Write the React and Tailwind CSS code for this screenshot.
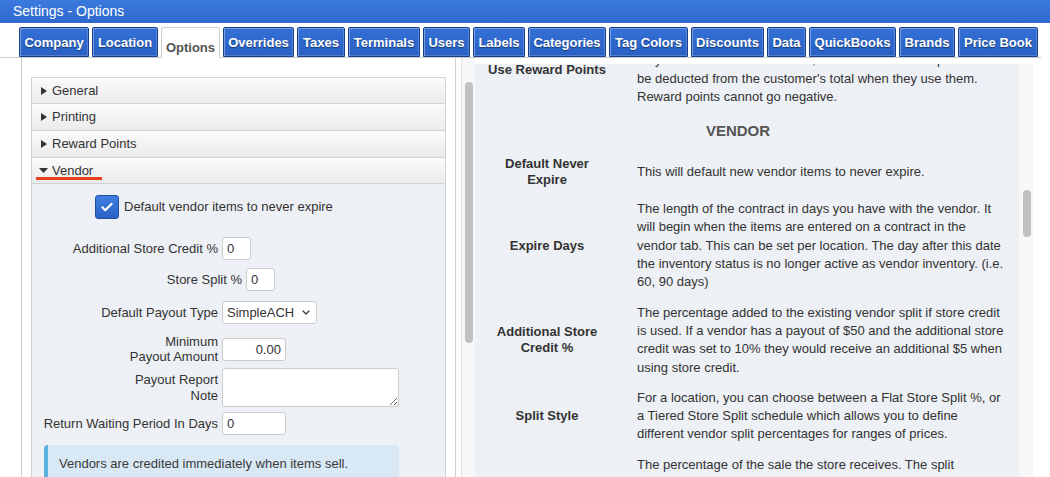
import React from 'react';

const tabs = [
  { label: 'Company', w: 'w-[70px]' },
  { label: 'Location', w: 'w-[66px]' },
  { label: 'Options', w: 'w-[59px]', active: true },
  { label: 'Overrides', w: 'w-[71px]' },
  { label: 'Taxes', w: 'w-[48px]' },
  { label: 'Terminals', w: 'w-[72px]' },
  { label: 'Users', w: 'w-[47px]' },
  { label: 'Labels', w: 'w-[52px]' },
  { label: 'Categories', w: 'w-[78px]' },
  { label: 'Tag Colors', w: 'w-[79px]' },
  { label: 'Discounts', w: 'w-[73px]' },
  { label: 'Data', w: 'w-[39px]' },
  { label: 'QuickBooks', w: 'w-[87px]' },
  { label: 'Brands', w: 'w-[56px]' },
  { label: 'Price Book', w: 'w-[80px]' },
];

function TriRight() {
  return (
    <svg width="6" height="8" viewBox="0 0 6 8" className="shrink-0">
      <path d="M0 0 L6 4 L0 8 Z" fill="#333" />
    </svg>
  );
}

function TriDown() {
  return (
    <svg width="9" height="5" viewBox="0 0 9 5" className="shrink-0">
      <path d="M0 0 L9 0 L4.5 5 Z" fill="#333" />
    </svg>
  );
}

function AccHeader({ label, h }) {
  return (
    <div className={`${h} flex items-center pl-[9px] gap-[5px] border-b border-[#d2d2d2] bg-linear-to-b from-[#fbfbfb] to-[#ebebeb]`}>
      <TriRight />
      <span>{label}</span>
    </div>
  );
}

function Input({ w, value = '', right = false }) {
  return (
    <input
      readOnly
      defaultValue={value}
      className={`${w} h-[23px] shrink-0 border border-[#cccccc] rounded-[3px] bg-white px-[4px] text-[13px] text-[#333] outline-none ${right ? 'text-right' : ''}`}
    />
  );
}

function DescRow({ label, children }) {
  return (
    <div className="flex items-center py-[6px]">
      <div className="w-[144px] shrink-0 px-[11px] text-center font-bold leading-[16px]">{label}</div>
      <div className="w-[400px] pl-[18px] pr-[13px] leading-[18.3px]">{children}</div>
    </div>
  );
}

function Label({ w, children, lh = 'leading-[15px]' }) {
  return (
    <div className={`${w} shrink-0 pr-[4px] flex justify-end`}>
      <div className={`text-right whitespace-nowrap ${lh}`}>{children}</div>
    </div>
  );
}

export default function App() {
  return (
    <div className="w-[1050px] h-[477px] overflow-hidden bg-white font-['Liberation_Sans',Arial,sans-serif] text-[13px] text-[#333]">
      {/* Title bar */}
      <div className="h-[23px] bg-linear-to-b from-[#3b7ade] to-[#2e68cd] text-white text-[14px] leading-[23px] pl-[13px]">
        Settings - Options
      </div>

      {/* Tabs */}
      <div className="h-[35px] w-[1041px] pt-[4px] pl-[19px] flex items-end gap-[3px] border-b border-[#cdcdcd]">
        {tabs.map((t) =>
          t.active ? (
            <div
              key={t.label}
              className={`${t.w} h-[31px] -mb-[1px] relative shrink-0 bg-white border border-b-0 border-[#cdcdcd] rounded-t-[3px] text-center font-bold text-[#555] pt-[12px] leading-[16px] whitespace-nowrap`}
            >
              {t.label}
            </div>
          ) : (
            <div
              key={t.label}
              className={`${t.w} h-[30px] shrink-0 whitespace-nowrap flex items-center justify-center pt-[2px] rounded-t-[2px] border border-[#173e88] bg-linear-to-b from-[#3470d6] to-[#2a60c4] shadow-[inset_1px_1px_0_rgba(255,255,255,0.35),inset_-1px_-1px_0_rgba(255,255,255,0.2)] text-white font-bold [text-shadow:0_1px_1px_rgba(0,0,0,0.45)]`}
            >
              {t.label}
            </div>
          )
        )}
      </div>

      {/* Main */}
      <div className="flex h-[419px]">
        {/* Left pane */}
        <div className="w-[461px] h-full shrink-0">
          <div className="ml-[21px] w-[435px] h-full border-x border-[#cfcfcf] pt-[19px] px-[9px] overflow-hidden">
            <div className="border-t border-x border-[#d2d2d2]">
              <AccHeader label="General" h="h-[26px]" />
              <AccHeader label="Printing" h="h-[27px]" />
              <AccHeader label="Reward Points" h="h-[27px]" />
              <div className="h-[26px] relative flex items-center pl-[7px] gap-[4px] border-b border-[#d2d2d2] bg-linear-to-b from-[#fbfbfb] to-[#ebebeb]">
                <TriDown />
                <span>Vendor</span>
                <div className="absolute left-[4px] top-[19px] w-[66px] h-[3px] bg-[#e5401e]" />
              </div>
            </div>
            <div className="bg-[#edf0f4] border-x border-[#d2d2d2] pt-[11px] h-[400px]">
              {/* Checkbox */}
              <div className="flex items-center ml-[63px]">
                <div className="w-[24px] h-[24px] rounded-[3px] border border-[#1f4ea4] bg-linear-to-b from-[#3f7fe0] to-[#2a61c6] flex items-center justify-center">
                  <svg width="14" height="14" viewBox="0 0 24 24">
                    <path d="M4 12.5l5 5L20 6.5" fill="none" stroke="white" strokeWidth="3.6" strokeLinecap="round" strokeLinejoin="round" />
                  </svg>
                </div>
                <span className="ml-[5px]">Default vendor items to never expire</span>
              </div>

              <div className="flex items-center mt-[18px] pl-[12px]">
                <Label w="w-[178px]">Additional Store Credit %</Label>
                <Input w="w-[29px]" value="0" />
              </div>

              <div className="flex items-center mt-[8px] pl-[12px]">
                <Label w="w-[202px]">Store Split %</Label>
                <Input w="w-[29px]" value="0" />
              </div>

              <div className="flex items-center mt-[10px] pl-[12px]">
                <Label w="w-[178px]">Default Payout Type</Label>
                <div className="w-[95px] h-[23px] border border-[#cccccc] rounded-[3px] bg-white flex items-center justify-between pl-[4px] pr-[6px]">
                  <span>SimpleACH</span>
                  <svg width="8" height="5" viewBox="0 0 8 5">
                    <path d="M1 1l3 3 3-3" fill="none" stroke="#333" strokeWidth="1.2" strokeLinecap="round" strokeLinejoin="round" />
                  </svg>
                </div>
              </div>

              <div className="flex items-center mt-[10px] pl-[12px]">
                <Label w="w-[178px]">
                  Minimum
                  <br />
                  Payout Amount
                </Label>
                <Input w="w-[64px]" value="0.00" right />
              </div>

              <div className="flex items-center mt-[4px] pl-[12px]">
                <Label w="w-[178px]" lh="leading-[16px]">
                  Payout Report
                  <br />
                  Note
                </Label>
                <textarea
                  readOnly
                  defaultValue=""
                  className="w-[177px] h-[39px] border border-[#cccccc] rounded-[3px] bg-white outline-none block"
                />
              </div>

              <div className="flex items-center mt-[5px] pl-[12px]">
                <Label w="w-[178px]">Return Waiting Period In Days</Label>
                <Input w="w-[64px]" value="0" />
              </div>

              <div className="ml-[12px] mt-[10px] w-[355px] bg-[#d8e8f5] border-l-[4px] border-[#5cb0dc] rounded-[4px] pl-[11px] py-[10px] leading-[18px] text-[#3a3a3a]">
                Vendors are credited immediately when items sell.
              </div>
            </div>
          </div>
        </div>

        {/* Left scrollbar */}
        <div className="w-[14px] h-full shrink-0 bg-[#f7f7f7] border-l border-[#e2e2e2] pt-[24px] pl-[3px]">
          <div className="w-[8px] h-[261px] rounded-full bg-[#c1c1c1]" />
        </div>

        {/* Right pane */}
        <div className="w-[544px] h-[413px] mt-[6px] shrink-0 bg-[#edf0f4] overflow-hidden">
          <div className="-mt-[37px]">
            <DescRow label="Use Reward Points">
              Customers earn reward points on qualifying purchases. Points
              <br />
              may be redeemed at checkout, and the value of the points will
              <br />
              be deducted from the customer's total when they use them. Reward points cannot go negative.
            </DescRow>
            <div className="h-[38px] flex items-center justify-center pr-[18px] text-[15px] font-bold text-[#555]">
              VENDOR
            </div>
            <DescRow label="Default Never Expire">This will default new vendor items to never expire.</DescRow>
            <DescRow label="Expire Days">
              The length of the contract in days you have with the vendor. It will begin when the items are entered on a
              contract in the vendor tab. This can be set per location. The day after this date the inventory status is no
              longer active as vendor inventory. (i.e. 60, 90 days)
            </DescRow>
            <DescRow label="Additional Store Credit %">
              The percentage added to the existing vendor split if store credit is used. If a vendor has a payout of $50
              and the additional store credit was set to 10% they would receive an additional $5 when using store credit.
            </DescRow>
            <DescRow label="Split Style">
              For a location, you can choose between a Flat Store Split %, or a Tiered Store Split schedule which allows
              you to define different vendor split percentages for ranges of prices.
            </DescRow>
            <DescRow label="Store Split %">
              The percentage of the sale the store receives. The split percentage can be overridden for individual vendors
              and for individual items. When a tiered schedule is used, this value is ignored and the tiers will be applied
              to each sale instead. The vendor receives the remaining percentage of the sale price after the store split
              has been taken out.
            </DescRow>
          </div>
        </div>

        {/* Right scrollbar */}
        <div className="w-[14px] h-[413px] mt-[6px] shrink-0 bg-[#f7f7f7] pt-[126px] pl-[4px]">
          <div className="w-[8px] h-[47px] rounded-full bg-[#c1c1c1]" />
        </div>
      </div>
    </div>
  );
}
